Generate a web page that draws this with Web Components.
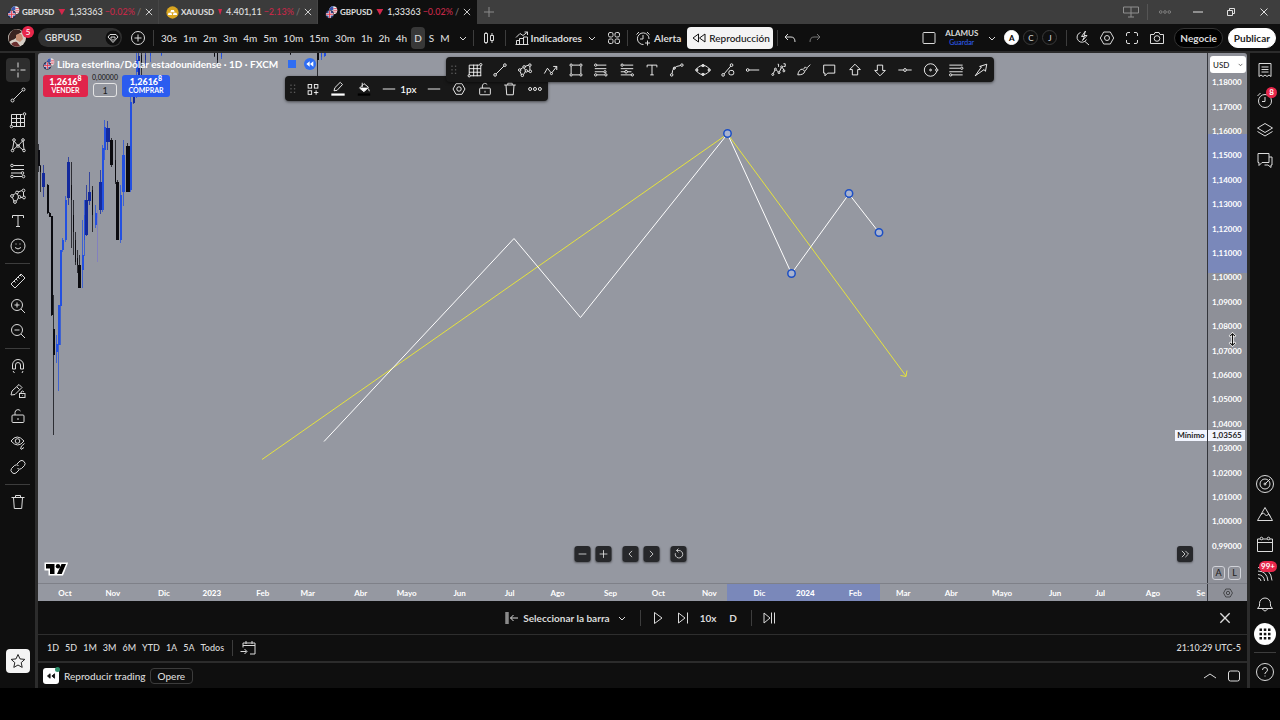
<!DOCTYPE html>
<html lang="es">
<head>
<meta charset="utf-8">
<meta name="viewport" content="width=device-width, initial-scale=1">
<title>GBPUSD</title>
<style>
  html, body { margin: 0; height: 100%; background: #000; }
  body { font: 500 10px/16px "Trebuchet MS", Lato, "Open Sans", sans-serif; color: #dbdbdb; overflow: hidden; }
</style>
</head>
<body>
<app-shell></app-shell>
<script>
const ICONS = {
  close: '<path d="M5.500 5.500l7 7M12.500 5.500l-7 7"/>',
  plus: '<path d="M9 4v10M4 9h10"/>',
  minus: '<path d="M4 9h10"/>',
  chevron: '<path d="M6 8l3 3 3-3"/>',
  up: '<path d="M3 11l6-4 6 4"/>',
  left: '<path d="M11 5L7 9l4 4"/>',
  right: '<path d="M7 5l4 4-4 4"/>',
  reset: '<path d="M5 8a4.800 4.800 0 1 0 4.500-3.500H6.500M9 2L6.500 4.500 9 7"/>',
  double: '<path d="M5 5l4 4-4 4M9.500 5l4 4-4 4"/>',
  monitor: '<path d="M1.500 4h15v6h-15zM9 4v10M6 14h6"/>',
  dots: '<circle cx="3.500" cy="9" r="1.700"/><circle cx="9" cy="9" r="1.700"/><circle cx="14.500" cy="9" r="1.700"/>',
  winrest: '<path d="M5.500 7.500h5v5h-5zM7.500 7.500v-2h5v5h-2"/>',
  gem: '<circle cx="9" cy="9" r="7.500" fill="#0f0f0f" stroke="none"/><path d="M6 5.500h6l2 2.500-5 5.500L4 8zM7 8h4v1.500L9 11.500 7 9.500z"/>',
  pluscircle: '<circle cx="9" cy="9" r="6.500"/><path d="M9 5.500v7M5.500 9h7"/>',
  candles: '<path d="M4.500 4.500h3v9h-3zM6 3v1.500M6 13.500V15M10.500 6.500h3v5h-3zM12 4v2.500M12 11.500V14"/>',
  indicators: '<path d="M3.500 15V11.500h3V15M6.500 15V9.500h4V15M10.500 15V8h4v7M3 8.500L7 4.500l3 2 4.500-3.500M11.500 3h3v3M2.500 15.500h13"/>',
  four: '<rect x="3.500" y="3.500" width="4.500" height="4.500" rx="1.500"/><rect x="10" y="3.500" width="4.500" height="4.500" rx="1.500"/><rect x="3.500" y="10" width="4.500" height="4.500" rx="1.500"/><rect x="10" y="10" width="4.500" height="4.500" rx="1.500"/>',
  alarm: '<path d="M9.500 15.500A5.800 5.800 0 1 1 15 10M9 6v4H6M2.500 5.500L5 3M13 3l2.500 2.500M13.500 11.500v5M11 14h5"/>',
  rewind: '<path d="M8.500 5v8L3 9zM15 5v8L9.500 9z"/>',
  undo: '<path d="M7 5L4 8l3 3M4 8h6q4 0 4 5"/>',
  redo: '<path d="M11 5l3 3-3 3M14 8H8q-4 0-4 5"/>',
  square: '<rect x="3" y="3.500" width="12" height="11" rx="1"/>',
  quick: '<path d="M7.500 3.500a5 5 0 1 0 6 7M12 12.500l4 3.500M12.500 2L8.500 7.500h3l-2 4L14 6.500h-3z"/>',
  hex: '<path d="M5.700 3h6.600L15.700 9l-3.400 6H5.700L2.300 9z"/><circle cx="9" cy="9" r="2.500"/>',
  full: '<path d="M3.500 7V5q0-1.500 1.500-1.500h2M11 3.500h2q1.500 0 1.500 1.500v2M14.500 11v2q0 1.500-1.500 1.500h-2M7 14.500H5q-1.500 0-1.500-1.500v-2"/>',
  camera: '<path d="M2.500 5.500h3.500l1-2h4l1 2h3.500v9h-13z"/><circle cx="9" cy="9.500" r="2.800"/>',
  cross: '<path d="M9 1.500v5M9 11.500v5M1.500 9h5M11.500 9h5M8.500 9h1"/>',
  line: '<circle cx="3.500" cy="14.500" r="1.500"/><circle cx="14.500" cy="3.500" r="1.500"/><path d="M4.600 13.400l8.800-8.800"/>',
  grid: '<path d="M2.500 3.500h11M2.500 7.500h13M2.500 11.500h13M4 15.500h12M2.500 3.500v11M7.500 3v13M11.500 3v13M15.500 4.500v11"/><circle cx="15.500" cy="3" r="1.300"/><circle cx="2.500" cy="15.500" r="1.300"/>',
  pattern: '<path d="M3.500 13.500L5 5l4 5 5-5.500 1 9M4.500 13.500L8 10.500M10 10.500l4 3.500"/><circle cx="5" cy="4" r="1.300"/><circle cx="14" cy="4" r="1.300"/><circle cx="9" cy="10" r="1.300"/><circle cx="3.500" cy="14.500" r="1.300"/><circle cx="15" cy="14.500" r="1.300"/>',
  fib: '<path d="M4.500 3.500H15M2 7.500h13M2 11h10M4.500 14.500H13"/><circle cx="3" cy="3.500" r="1.300"/><circle cx="13.500" cy="11" r="1.300"/><circle cx="3" cy="14.500" r="1.300"/><circle cx="14.500" cy="14.500" r="1.300"/>',
  fib2: '<path d="M5 3.500h11M2 7.500h14M9.500 11H14M2 11h5M2 14.500h12"/><circle cx="3.500" cy="3.500" r="1.300"/><circle cx="8" cy="11" r="1.500"/><circle cx="15" cy="14.500" r="1.300"/>',
  shapes: '<path d="M5 14.500l-1.500-4M4 8l2.500-1.500M9 5l4-1.500M14.500 5v4M13.500 10.500H12M9.500 10.500L7.500 14M8 7l1.500 2"/><circle cx="8" cy="5.500" r="1.400"/><circle cx="14.500" cy="3.500" r="1.400"/><circle cx="15" cy="10.500" r="1.400"/><circle cx="3" cy="9" r="1.400"/><circle cx="6" cy="15" r="1.400"/><circle cx="10.500" cy="10" r="1.400"/>',
  text: '<path d="M3.500 6V3.500h11V6M9 3.500v11M7 14.500h4"/>',
  smile: '<circle cx="9" cy="9" r="7"/><path d="M6 10.500q3 3 6 0M6.500 7h1M10.500 7h1"/>',
  ruler: '<path d="M2 12L12 2l4 4L6 16zM5 9l1.500 1.500M7 7l1.500 1.500M9 5l1.500 1.500M11 3l1.500 1.500"/>',
  zoomin: '<circle cx="8" cy="8" r="5.500"/><path d="M12 12l4 4M5.500 8h5M8 5.500v5"/>',
  zoomout: '<circle cx="8" cy="8" r="5.500"/><path d="M12 12l4 4M5.500 8h5"/>',
  magnet: '<path d="M3.500 12V8a5.500 5.500 0 0 1 11 0v4h-3V8a2.500 2.500 0 0 0-5 0v4zM4 14l1.500 2M13 16l1-2"/>',
  penlock: '<path d="M2 13l1-4 7-6.500 3 3L6 12.500zM8 5l2.500 2.500"/><rect x="10.500" y="11.500" width="5.500" height="4" fill="#0f0f0f"/><path d="M12 11.500V10q1.500-2 3 0M13 13.500h.5"/>',
  lock: '<rect x="3" y="8" width="12" height="7.500" rx="1"/><path d="M6 8V5.500a3 3 0 0 1 5.500-1.500M9 11v2"/>',
  eye: '<path d="M2 8q6-8 13 0-6 8-13 0z"/><circle cx="8.500" cy="8" r="2.300"/><path d="M11.500 16l1-3 3-2.500M12 16.500l3-2"/>',
  link: '<path d="M8 6l3-3q2-1.500 4 .5t.5 4l-3 3q-2 1.500-4 0M10 12l-3 3q-2 1.500-4-.5t-.5-4l3-3q2-1.500 4 0"/>',
  trash: '<path d="M2.500 4.500h13M6.500 4.500v-2h5v2M4.500 4.500l.8 11h7.400l.8-11"/>',
  star: '<path d="M9 2.500l2 4.400 4.800.5-3.600 3.200 1 4.800L9 13l-4.200 2.400 1-4.800-3.600-3.200 4.800-.5z"/>',
  zigzag: '<path d="M1.500 13L5 7l4 5M10 12l5.500-7M11.500 5h4v4"/><circle cx="9.500" cy="13" r="1.200"/>',
  rect: '<path d="M5 3.500h8M5 14.500h8M3.500 5v8M14.500 5v8"/><circle cx="3.500" cy="3.500" r="1.300"/><circle cx="14.500" cy="3.500" r="1.300"/><circle cx="3.500" cy="14.500" r="1.300"/><circle cx="14.500" cy="14.500" r="1.300"/>',
  curve: '<path d="M3.500 13q0-8 9.500-9"/><circle cx="3" cy="14.500" r="1.400"/><circle cx="14.500" cy="3.500" r="1.400"/><circle cx="6" cy="7" r="1.200" />',
  ellipse: '<ellipse cx="9" cy="9" rx="7" ry="5"/><circle cx="9" cy="4" r="1.300"/><circle cx="9" cy="14" r="1.300"/><circle cx="2" cy="9" r="1.300"/><circle cx="16" cy="9" r="1.300"/>',
  linelock: '<circle cx="3.500" cy="14.500" r="1.500"/><circle cx="13" cy="3.500" r="1.500"/><path d="M4.600 13.400l7.500-8.800"/><rect x="10" y="9.500" width="5.500" height="5" rx="2"/>',
  hray: '<circle cx="3" cy="9" r="1.500"/><path d="M4.500 9H16"/>',
  elliott: '<path d="M2.500 13l2-4M6 9l2.500 2.500M9.500 11l2-4.500M13 6.500l1.500 2.500M7.500 2.500h1v3M14 2h2v3h-2"/><circle cx="5" cy="8" r="1.100"/><circle cx="9" cy="12" r="1.100"/><circle cx="12" cy="5.500" r="1.100"/><circle cx="2" cy="14" r="1.100"/><circle cx="14.500" cy="10" r="1.100"/>',
  brush: '<path d="M2 14.500q1-6 5-6.500l3 2.500q-1 4-8 4zM8.500 8l2-2.500 2 2L10 10M12.500 6.500L16 3"/>',
  note: '<path d="M3 3.500h12.500v9H7.500l-3 3v-3H3z"/>',
  arrowup: '<path d="M9 2.500l6 6h-3v6H6v-6H3z"/>',
  arrowdown: '<path d="M9 15.500l6-6h-3v-6H6v6H3z"/>',
  hline: '<path d="M1.500 9h5.500M11 9h5.500"/><circle cx="9" cy="9" r="1.600"/>',
  circle: '<circle cx="8.500" cy="9" r="7"/><circle cx="8.500" cy="9" r="1"/><circle cx="15.500" cy="9" r="1.300" fill="#0f0f0f"/>',
  channel: '<path d="M1.500 3.500h15M1.500 7h12M1.500 11h15M4.500 14.500h12"/><circle cx="15.500" cy="7" r="1.300"/><circle cx="3" cy="14.500" r="1.300"/>',
  arrow: '<path d="M2.500 15.500l7-10-2-.5 8-2.500-1.500 8-1.500-2z"/>',
  grip: '<g fill="#5a5a5a" stroke="none"><rect x="6" y="4" width="1.500" height="1.500"/><rect x="10" y="4" width="1.500" height="1.500"/><rect x="6" y="8" width="1.500" height="1.500"/><rect x="10" y="8" width="1.500" height="1.500"/><rect x="6" y="12" width="1.500" height="1.500"/><rect x="10" y="12" width="1.500" height="1.500"/></g>',
  template: '<rect x="3.500" y="4" width="4" height="4"/><rect x="10.500" y="4" width="4" height="4"/><rect x="3.500" y="11" width="4" height="4"/><path d="M12.500 10.500v5M10 13h5"/>',
  pencil: '<path d="M4.500 11l1-3.500L11.500 1.500l2.500 2.500L8 10.500z"/><rect x="1.500" y="14" width="15" height="2.500" fill="#fff" stroke="none"/>',
  bucket: '<path d="M4 8l5-5 5 4-5 5zM7 2v5M14 8.500l1 3"/><path d="M5 8h8l-4 3.500z" fill="currentColor"/><rect x="2" y="14" width="14" height="2.500" fill="#000" stroke="none"/>',
  dash: '<path d="M2 9h14"/>',
  list: '<path d="M3 2.500h12v13l-2-1.500-2 1.500-2-1.500-2 1.500-2-1.500-2 1.500zM5.500 6h7M5.500 8.500h7M5.500 11h7"/>',
  clock: '<circle cx="9" cy="10" r="6.500"/><path d="M9 6v4.500H6M1.500 5L4.500 2"/>',
  layers: '<path d="M1.500 7L9 2.500 16.500 7 9 11.500zM1.500 10.500L9 15l7.500-4.500"/>',
  chat: '<path d="M2 2.500h11v9H6l-3 3v-3H2zM13 6h3v8h-1v2.500L12 14H8.500"/>',
  radar: '<circle cx="9" cy="9" r="8.500"/><circle cx="9" cy="9" r="5"/><circle cx="9" cy="9" r="1"/><path d="M9 9l5-5"/>',
  mount: '<path d="M9 2.500l7.500 13h-15zM5 9.500l2.500-1.500 3 3 2-2 2 2.500"/>',
  calendar: '<path d="M1.500 4h15v12.500h-15zM1.500 7.500h15"/><circle cx="5.500" cy="3.500" r="1.300" fill="#0f0f0f"/><circle cx="12.500" cy="3.500" r="1.300" fill="#0f0f0f"/>',
  feed: '<path d="M2 6q9 0 10 10M2 9.500q6 .5 6.500 6.500M2 13q2.500 0 3 3M2 2.500q13 .5 14 13"/>',
  bell: '<path d="M1.500 13.500h15l-2-2.500V8.500a5.500 5.500 0 0 0-11 0V11zM6.500 14q2.500 4 5 0"/>',
  help: '<circle cx="9" cy="9" r="8.500"/><path d="M6.500 7q0-2.500 2.500-2.500T11.500 7Q11.500 8.500 9 10v1M9 12.500v1"/>',
  apps: '<g fill="#111" stroke="none"><rect x="3.500" y="3.500" width="2.500" height="2.500"/><rect x="7.800" y="3.500" width="2.500" height="2.500"/><rect x="12" y="3.500" width="2.500" height="2.500"/><rect x="3.500" y="7.800" width="2.500" height="2.500"/><rect x="7.800" y="7.800" width="2.500" height="2.500"/><rect x="12" y="7.800" width="2.500" height="2.500"/><rect x="3.500" y="12" width="2.500" height="2.500"/><rect x="7.800" y="12" width="2.500" height="2.500"/><rect x="12" y="12" width="2.500" height="2.500"/></g>',
  selbar: '<path d="M4 3v12" stroke-width="3.500" stroke="#8a8a8a"/><path d="M7.500 9H15M10.500 6l-3 3 3 3"/>',
  play: '<path d="M5.500 3.500v11L13 9z"/>',
  step: '<path d="M4.500 4v10l6.500-5zM13.500 3.500v11"/>',
  end: '<path d="M4 4v10l6-5zM11.500 3.500v11M14.500 3.500v11"/>',
  goto: '<path d="M4 8.500V4h12v11h-5M4 6.500h12M7 2v3M13 2v3M1.500 12.500h6M5.500 10l2.500 2.500L5.500 15"/>',
  box: '<rect x="3.500" y="4" width="11" height="10" rx="2"/>',
  flags: '<circle cx="11.500" cy="6" r="5.500" fill="#eee" stroke="none"/><path d="M11.500 3.500h5M11.500 6h5.500M7 8.500h9" stroke="#e0354b"/><path d="M11.500.500a5.500 5.500 0 0 0-5.500 5.500h5.500z" fill="#3a57b0" stroke="none"/><circle cx="6.500" cy="11.500" r="5.500" fill="#33489c" stroke="#222"/><path d="M6.500 6.500v10M1.500 11.500h10" stroke="#fff" stroke-width="3"/><path d="M6.500 6.500v10M1.500 11.500h10" stroke="#e0354b" stroke-width="1.500"/>',
  gold: '<circle cx="9" cy="9" r="8.500" fill="#d9a520" stroke="none"/><path d="M7 5.500h4l1 3H6zM3.500 9.500h4l1 3h-6zM10.500 9.500h4l1 3h-6z" fill="#fff" stroke="none"/>',
  avatar: '<circle cx="9" cy="9" r="9" fill="#d6cfc6" stroke="none"/><path d="M1 13Q-.5 5 5 1q6-2 9 2-3 1-5 4-1 3-5 4z" fill="#3b2420" stroke="none"/><path d="M8 6q4-3 6 0l1 4-3 3-4-2z" fill="#c78f74" stroke="none"/><path d="M3 15q3-3 6-2l3 4q-5 2-9-2z" fill="#6b2f2f" stroke="none"/>',
  rewbadge: '<circle cx="9" cy="9" r="9" fill="#2f6df2" stroke="none"/><path d="M8.500 5v8L3.500 9zM14 5v8L9 9z" fill="#fff" stroke="none"/>',
  rewsolid: '<path d="M8 6.500v5L5 9zM13 6.500v5L10 9z" fill="#111" stroke="#111"/>',
  resize: '<path d="M9 2v14M5.500 5.500L9 2l3.500 3.500M5.500 12.500L9 16l3.500-3.500" stroke="#fff" stroke-width="3"/><path d="M9 2v14M6 5l3-3 3 3M6 13l3 3 3-3" stroke="#111" stroke-width="1.300"/>'
};

const COMMON = `
  :host, * { box-sizing: border-box; }
  button, input, select { font: inherit; color: inherit; background: none; border: 0; padding: 0; margin: 0; }
  button { display: inline-flex; align-items: center; justify-content: center; white-space: nowrap; flex: none; }
  a { color: inherit; text-decoration: none; }
  .sep { width: 1px; height: 16px; background: #3d3d3d; flex: none; }
`;

function define(name, css, html) {
  customElements.define(name, class extends HTMLElement {
    constructor() {
      super();
      const template = document.createElement('template');
      const markup = typeof html === 'function' ? html(this) : html;
      template.innerHTML = `<style>${COMMON}${css}</style>${markup}`;
      this.attachShadow({ mode: 'open' }).append(template.content.cloneNode(true));
    }
  });
}

const icon = (name, cls = '') => `<ui-icon name="${name}" class="${cls}"></ui-icon>`;
const iconButton = (name, label = name, cls = '') => `<button class="ib ${cls}" aria-label="${label}">${icon(name)}</button>`;

define('ui-icon', `
  :host { display: inline-block; width: var(--icon, 18px); height: var(--icon, 18px); flex: none; }
  svg { display: block; width: 100%; height: 100%; overflow: visible; fill: none; stroke: currentColor; stroke-width: 1; }
`, host => `<svg viewBox="0 0 18 18" aria-hidden="true">${ICONS[host.getAttribute('name')] || ''}</svg>`);

define('ticker-tab', `
  :host { display: flex; align-items: center; width: 159px; height: 24px; padding: 0 1px 0 7px; background: #3b3b3b; font-size: 9px; border-right: 1px solid #454545; }
  :host([active]) { background: #0f0f0f; border-color: #0f0f0f; }
  a { display: flex; align-items: center; flex: 1; min-width: 0; white-space: nowrap; gap: 2px; }
  .flag { --icon: 13px; }
  .name { font-weight: 700; font-size: 8px; }
  .down { width: 8px; height: 6px; margin: 0 2px; background: #d3274b; clip-path: polygon(0 0, 100% 0, 50% 100%); }
  .pct { color: #c52848; }
  .slash { color: #777; }
  button { --icon: 16px; }
`, host => `
  <a href="#">${icon(host.getAttribute('flag'), 'flag')}<span class="name"><slot></slot></span><span class="down"></span><span>${host.getAttribute('price')}</span><span class="pct">${host.getAttribute('pct')}</span><span class="slash">/</span></a>
  <button aria-label="Cerrar pestaña">${icon('close')}</button>`);

define('tab-strip', `
  :host { display: flex; height: 24px; background: #3e3e3e; align-items: center; color: #e0e0e0; }
  .add { width: 24px; height: 24px; color: #8a8a8a; }
  .win { display: flex; margin-left: auto; align-items: center; height: 24px; }
  .win button { width: 33px; height: 24px; }
  .win .dim { color: #8f8f8f; }
  .win .sep { background: #555; }
  .win .dots { --icon: 14px; }
`, `
  <ticker-tab flag="flags" price="1,33363" pct="−0.02%">GBPUSD</ticker-tab>
  <ticker-tab flag="gold" price="4.401,11" pct="−2.13%">XAUUSD</ticker-tab>
  <ticker-tab flag="flags" price="1,33363" pct="−0.02%" active>GBPUSD</ticker-tab>
  <button class="add" aria-label="Nueva pestaña">${icon('plus')}</button>
  <div class="win">
    ${iconButton('monitor', 'Pantalla', 'dim')}<span class="sep"></span>
    ${iconButton('dots', 'Más', 'dim dots')}${iconButton('minus', 'Minimizar')}${iconButton('winrest', 'Restaurar')}${iconButton('close', 'Cerrar')}
  </div>`);

define('top-bar', `
  :host { display: flex; align-items: center; height: 27px; background: #0f0f0f; padding: 0 4px 0 8px; }
  .avatar { position: relative; --icon: 18px; width: 18px; height: 18px; margin-right: 12px; }
  .badge { position: absolute; left: 14px; top: -3px; width: 12px; height: 12px; border-radius: 6px; background: #e8274b; color: #fff; font-size: 8px; line-height: 12px; text-align: center; }
  .symbol { width: 84px; height: 19px; border-radius: 10px; background: #303030; justify-content: space-between; padding: 0 0 0 7px; font-weight: 700; font-size: 9px; }
  .ib { width: 25px; height: 22px; }
  .add { width: 31px; }
  .frames { display: flex; padding: 0 0 0 4px; }
  .frames button { height: 22px; padding: 0 3px; border-radius: 4px; }
  .frames .on { background: #383838; margin: 0 1px; }
  .grow { flex: 1; }
  .bold { font-weight: 700; }
  .replay { height: 22px; padding: 0 3px; background: #f4f4f4; color: #111; border-radius: 4px; gap: 1px; }
  .alert { padding: 0 6px; gap: 2px; }
  .ind { padding: 0 0 0 7px; }
  .chev { width: 20px; }
  .layout { flex-direction: column; line-height: 9px; padding: 0 4px; font-size: 8px; font-weight: 700; }
  .layout small { color: #2d5cf0; font-size: 7px; font-weight: 500; }
  .dot { width: 15px; height: 15px; margin: 0 2px; border-radius: 8px; border: 1px solid #3a3a3a; font-size: 8px; line-height: 12px; }
  .dot.on { background: #fff; color: #000; border-color: #fff; font-weight: 700; }
  .pill { height: 20px; padding: 0 5px; border-radius: 10px; border: 1px solid #333; background: #000; font-weight: 700; margin-left: 5px; }
  .pill.white { background: #fff; color: #222; border-color: #fff; }
  .dimmed { color: #777; }
  .sep.after { margin-left: 4px; }
  .sep.before { margin: 0 2px 0 7px; }
`, `
  <button class="avatar" aria-label="Perfil">${icon('avatar')}<span class="badge">5</span></button>
  <button class="symbol">GBPUSD${icon('gem')}</button>
  ${iconButton('pluscircle', 'Comparar', 'add')}
  <span class="sep"></span>
  <nav class="frames">
    ${['30s','1m','2m','3m','4m','5m','10m','15m','30m','1h','2h','4h','D','S','M'].map(t => `<button class="${t === 'D' ? 'on' : ''}">${t}</button>`).join('')}
  </nav>
  ${iconButton('chevron', 'Intervalos', 'chev')}
  <span class="sep"></span>
  ${iconButton('candles', 'Velas', 'add')}
  <span class="sep"></span>
  <button class="ind bold">${icon('indicators')}Indicadores</button>
  ${iconButton('chevron', 'Favoritos', 'chev')}
  ${iconButton('four', 'Plantillas')}
  <span class="sep"></span>
  <button class="alert bold">${icon('alarm')}Alerta</button>
  <button class="replay">${icon('rewind')}Reproducción</button>
  <span class="sep after"></span>
  ${iconButton('undo', 'Deshacer')}${iconButton('redo', 'Rehacer', 'dimmed')}
  <span class="grow"></span>
  ${iconButton('square', 'Diseño')}
  <button class="layout"><span>ALAMUS</span><small>Guardar</small></button>
  ${iconButton('chevron', 'Diseños', 'chev')}
  <button class="dot on">A</button><button class="dot">C</button><button class="dot">J</button>
  <span class="sep before"></span>
  ${iconButton('quick', 'Búsqueda rápida')}${iconButton('hex', 'Ajustes')}${iconButton('full', 'Pantalla completa')}${iconButton('camera', 'Captura')}
  <button class="pill">Negocie</button>
  <button class="pill white">Publicar</button>`);

define('tool-rail', `
  :host { display: flex; flex-direction: column; align-items: center; width: 35px; background: #0f0f0f; padding: 4px 0 15px; }
  .group { display: grid; grid-auto-rows: 1fr; }
  .g8 { height: 202px; } .g3 { height: 76px; } .g5 { height: 127px; } .g1 { height: 25px; }
  .ib { width: 24px; height: 24px; border-radius: 4px; align-self: center; }
  .on { background: #2e2e2e; }
  hr { width: 25px; height: 1px; border: 0; background: #3d3d3d; margin: 4px 0; }
  .fav { margin-top: auto; width: 24px; height: 24px; border-radius: 4px; background: #f4f4f4; color: #222; }
`, `
  <div class="group g8">${iconButton('cross', 'Cursor', 'on')}${['line','grid','pattern','fib','shapes','text','smile'].map(n => iconButton(n)).join('')}</div><hr>
  <div class="group g3">${['ruler','zoomin','zoomout'].map(n => iconButton(n)).join('')}</div><hr>
  <div class="group g5">${['magnet','penlock','lock','eye','link'].map(n => iconButton(n)).join('')}</div><hr>
  <div class="group g1">${iconButton('trash')}</div>
  <button class="fav" aria-label="Favoritos">${icon('star')}</button>`);

define('side-rail', `
  :host { display: flex; flex-direction: column; align-items: center; width: 30px; background: #0f0f0f; padding: 2px 0 1px; }
  .ib { position: relative; width: 30px; height: 30px; }
  .grow { flex: 1; }
  .wrap { position: relative; display: flex; }
  .badge { position: absolute; right: 3px; top: 2px; min-width: 11px; height: 11px; padding: 0 2px; border-radius: 6px; background: #e8274b; color: #fff; font-size: 8px; line-height: 11px; text-align: center; font-weight: 700; }
  .badge.wide { right: 3px; }
  .apps { width: 22px; height: 22px; margin: 4px; border-radius: 11px; background: #fff; }
  hr { width: 22px; height: 1px; border: 0; background: #3d3d3d; margin: 3px 0 4px; }
`, `
  ${iconButton('list')}
  <div class="wrap">${iconButton('clock')}<span class="badge">8</span></div>
  ${iconButton('layers')}${iconButton('chat')}
  <span class="grow"></span>
  ${iconButton('radar')}${iconButton('mount')}${iconButton('calendar')}
  <div class="wrap">${iconButton('feed')}<span class="badge wide">99+</span></div>
  ${iconButton('bell')}
  <button class="apps" aria-label="Aplicaciones">${icon('apps')}</button>
  <hr>
  ${iconButton('help')}`);

define('draw-toolbar', `
  :host { display: grid; grid-template-columns: 16px repeat(21, 1fr); align-items: center; justify-items: center; height: 25px; background: #181818; border-radius: 4px; box-shadow: 0 1px 3px #0008; --icon: 16px; }
  .ib { width: 24px; height: 24px; }
`, `${icon('grip')}${['grid','line','shapes','zigzag','rect','fib','fib2','text','curve','ellipse','linelock','hray','elliott','brush','note','arrowup','arrowdown','hline','circle','channel','arrow'].map(n => iconButton(n)).join('')}`);

define('line-toolbar', `
  :host { display: flex; align-items: center; height: 25px; background: #181818; border-radius: 4px; box-shadow: 0 1px 3px #0008; --icon: 16px; }
  .ib, .px { flex: 1 1 25px; height: 24px; }
  .px { flex-basis: 45px; gap: 3px; }
`, `${icon('grip', 'grip')}${iconButton('template')}${iconButton('pencil')}${iconButton('bucket')}<button class="px">${icon('dash')}1px</button>${iconButton('dash', 'Estilo')}${iconButton('hex')}${iconButton('lock')}${iconButton('trash')}${iconButton('dots')}`);

/* Candle list: x, wick top, wick bottom, body top, body bottom, body width, colour key */
const CANDLES = [
  [38,144,172,150,166,2,'k'],[40,165,192,166,172,1,'k'],[43,165,197,173,187,3,'n'],[47,184,214,185,213,2,'k'],[49,212,217,213,217,2,'k'],
  [51,216,316,216,315,2,'k'],[53,295,435,329,355,2,'k'],[56,335,363,344,352,2,'b'],[58,305,391,305,345,2,'b'],[60,250,345,250,306,2,'b'],
  [62,238,252,240,250,2,'b'],[65,196,242,200,240,2,'b'],[68,157,205,162,198,3,'n'],[71,162,248,185,200,1,'k'],[73,200,255,215,232,1,'k'],
  [75,232,265,240,262,1,'k'],[77,250,273,258,265,1,'k'],[79,255,288,265,288,3,'k'],[82,220,288,255,270,2,'b'],[84,200,256,215,240,1,'b'],
  [86,185,236,200,235,3,'n'],[89,172,205,192,201,3,'n'],[92,186,232,190,215,1,'k'],[95,205,228,213,225,2,'b'],[97,210,262,213,218,1,'p'],
  [100,170,214,182,210,3,'n'],[102,145,212,148,210,2,'b'],[104,120,160,127,150,2,'b'],[107,121,150,128,142,4,'n'],[111,138,167,140,165,3,'k'],
  [115,140,184,160,182,1,'k'],[117,180,240,182,240,3,'k'],[120,185,243,195,240,2,'b'],[123,140,206,155,192,3,'b'],[127,143,192,146,192,4,'k'],
  [130,96,192,102,190,2,'b'],[133,88,104,95,103,2,'n'],[136,53,98,60,72,2,'b'],[138,53,90,56,80,2,'n'],[141,53,84,55,62,1,'k'],
  [145,53,66,55,60,1,'n'],[150,53,62,53,56,1,'b'],[161,53,56,53,55,1,'b'],[214,53,57,53,56,1,'k'],[217,53,63,53,60,1,'k'],[221,53,59,53,57,1,'b'],
  [290,53,55,53,54,1,'k'],[317,53,85,53,60,2,'k'],[321,53,60,53,57,1,'b'],[324,53,57,53,56,2,'b']
];
const INK = { k: '#0b0b10', b: '#2350e0', n: '#142a9c', p: '#7d78c8' };

define('price-chart', `
  :host { display: block; position: relative; background: #9598a1; overflow: hidden; color: #fff; }
  svg.plot { position: absolute; inset: 0; width: 100%; height: 100%; }
  .plot * { vector-effect: non-scaling-stroke; }
  .legend { position: relative; padding: 3px 5px; }
  .title { display: flex; align-items: center; gap: 2px; height: 16px; font-weight: 700; white-space: nowrap; }
  .title .flag { --icon: 12px; }
  .mark { width: 8px; height: 8px; background: #2f6df2; margin: 0 6px 0 8px; }
  .title .rew { --icon: 12px; }
  .trade { display: flex; gap: 5px; align-items: flex-start; margin-top: 3px; }
  .trade button { flex-direction: column; width: 45px; height: 22px; border-radius: 3px; background: #e0244a; font-size: 8px; line-height: 9px; font-weight: 700; }
  .trade button.buy { width: 48px; background: #2b5cf0; }
  .trade b { font-size: 9px; }
  .trade span { font-size: 7px; }
  sup { font-size: 7px; line-height: 0; }
  label { display: flex; flex-direction: column; width: 24px; align-items: center; color: #222; font-size: 7px; line-height: 8px; margin-top: -2px; }
  input { width: 24px; height: 14px; margin-top: 2px; border: 1px solid #e4e4e4; border-radius: 3px; text-align: center; font-size: 9px; line-height: 12px; }
  .tool { position: absolute; }
  draw-toolbar { left: 34.900%; width: 548px; top: 4px; }
  line-toolbar { left: 21.100%; width: 263px; top: 23px; }
  .nav { position: absolute; left: 50%; bottom: 21px; display: flex; gap: 5px; transform: translateX(-50%); padding-left: 15px; }
  .nav button, .latest { width: 16px; height: 16px; border-radius: 3px; background: #27282b; box-shadow: 0 1px 2px #0006; --icon: 14px; color: #eee; }
  .nav .far { margin-left: 6px; }
  .latest { position: absolute; right: 14px; bottom: 21px; }
  .logo { position: absolute; left: 6px; bottom: 6px; width: 24px; height: 16px; }
  .low { position: absolute; right: 0; top: 71.100%; width: 32px; height: 11px; background: #f2f5ff; color: #222; font-size: 8px; line-height: 11px; text-align: center; font-weight: 700; }
`, `
  <svg class="plot" viewBox="38 53 1169 530" preserveAspectRatio="none" aria-hidden="true">
    ${CANDLES.map(([x, wt, wb, bt, bb, w, c]) => `<path d="M${x + .5} ${wt}V${wb}" stroke="${INK[c]}" opacity=".75"/><rect x="${x - (w > 2 ? 1 : 0)}" y="${bt}" width="${w}" height="${bb - bt}" fill="${INK[c]}"/>`).join('')}
    <g fill="none" stroke-width="1">
      <path d="M262 459.500L727.500 134 906 376M900.500 375.500l5.500 1 1-6" stroke="#e6e33c"/>
      <path d="M324 441.500L514 238.500l66.500 79L727.500 134 791.500 273.500 849 194l30 38.500" stroke="#fff"/>
    </g>
    <g fill="#a9b3cf" stroke="#1c4fc4" stroke-width="1.500">
      <circle cx="727.500" cy="133.500" r="3.700"/><circle cx="791.500" cy="273.500" r="3.700"/><circle cx="849" cy="193.500" r="3.700"/><circle cx="879" cy="232.500" r="3.700"/>
    </g>
  </svg>
  <div class="legend">
    <div class="title">${icon('flags', 'flag')}<span>Libra esterlina/Dólar estadounidense · 1D · FXCM</span><span class="mark"></span>${icon('rewbadge', 'rew')}</div>
    <div class="trade">
      <button><b>1,2616<sup>8</sup></b><span>VENDER</span></button>
      <label>0,00000<input value="1" aria-label="Cantidad"></label>
      <button class="buy"><b>1,2616<sup>8</sup></b><span>COMPRAR</span></button>
    </div>
  </div>
  <line-toolbar class="tool"></line-toolbar>
  <draw-toolbar class="tool"></draw-toolbar>
  <div class="nav">${iconButton('minus', 'Alejar')}${iconButton('plus', 'Acercar')}${iconButton('left', 'Atrás', 'far')}${iconButton('right', 'Adelante')}${iconButton('reset', 'Restablecer', 'far')}</div>
  <button class="latest" aria-label="Última barra">${icon('double')}</button>
  <svg class="logo" viewBox="0 0 24 16" aria-hidden="true"><path d="M2 3h9v10H6V8H2zM12 3h10l-4 10h-6l2.500-5H12z" fill="#fff" stroke="#fff" stroke-width="3"/><path d="M2 3h8.500v10H6V7.500H2zM17.500 3H22l-4.300 10H13z" fill="#000"/><circle cx="14" cy="5.200" r="2.200" fill="#000"/></svg>
  <span class="low">Mínimo</span>`);

const PRICES = Array.from({ length: 20 }, (_, i) => ((118 - i) / 100).toFixed(5).replace('.', ','));

define('price-axis', `
  :host { display: flex; flex-direction: column; position: relative; width: 40px; background: #8e9098; border-left: 1px solid #33353b; color: #fff; font-size: 8px; padding: 17px 0 0; }
  .range { position: absolute; left: 0; right: 0; top: 15.300%; height: 26.200%; background: #7a88ba; }
  ol { position: relative; list-style: none; margin: 0; padding: 0; flex: 1; display: grid; grid-auto-rows: 1fr; }
  li { display: flex; align-items: center; padding-left: 4px; line-height: 12px; font-weight: 700; }
  .cur { position: absolute; left: 2px; top: 3px; width: 36px; height: 17px; background: #fff; border-radius: 3px; color: #222; display: flex; align-items: center; }
  select { appearance: none; width: 100%; padding-left: 3px; }
  .cur ui-icon { position: absolute; right: 0; --icon: 11px; pointer-events: none; }
  .value { position: absolute; left: 0; top: 71.100%; width: 37px; height: 11px; padding-left: 4px; background: #f2f5ff; color: #222; line-height: 11px; font-weight: 700; }
  .scale { display: flex; gap: 3px; padding: 5px 4px 0; height: 25px; align-items: center; }
  .scale button { width: 13px; height: 14px; border: 1px solid #d0d2d8; border-radius: 3px; color: #222; font-size: 9px; line-height: 12px; }
  .cursor { position: absolute; left: 17px; top: 52.600%; --icon: 15px; }
`, `
  <span class="range"></span>
  <ol>${PRICES.map(p => `<li>${p}</li>`).join('')}</ol>
  <span class="value">1,03565</span>
  <label class="cur"><select aria-label="Moneda"><option>USD</option></select>${icon('chevron')}</label>
  <div class="scale"><button>A</button><button>L</button></div>
  ${icon('resize', 'cursor')}`);

/* Each label with its distance to the following one */
const DATES = [['Oct',48],['Nov',51],['Dic',48],['2023',51],['Feb',45],['Mar',53],['Abr',46],['Mayo',53],['Jun',50],['Jul',48],['Ago',53],['Sep',48],['Oct',51],['Nov',50],['Dic',46],['2024',50],['Feb',48],['Mar',48],['Abr',51],['Mayo',53],['Jun',45],['Jul',53],['Ago',48],['Se',6]];

define('time-axis', `
  :host { display: flex; height: 18px; background: #9598a1; color: #fff; border-top: 1px solid #7e8088; font-size: 8px; font-weight: 700; }
  .scale { position: relative; flex: 1; min-width: 0; display: flex; overflow: hidden; align-items: center; }
  .range { position: absolute; top: 0; bottom: 0; left: 58.900%; width: 13.100%; background: #7a88ba; }
  .cell { position: relative; min-width: 0; }
  .cell span { display: flex; width: 0; justify-content: center; line-height: 16px; }
  .y { font-weight: 900; }
  .set { width: 40px; border-left: 1px solid #33353b; background: #8e9098; color: #222; --icon: 12px; }
`, `
  <div class="scale"><span class="range"></span><div class="cell" style="flex:27 1 0"></div>${DATES.map(([d, g]) => `<div class="cell ${/^2/.test(d) ? 'y' : ''}" style="flex:${g} 1 0"><span>${d}</span></div>`).join('')}</div>
  <button class="set" aria-label="Ajustes de escala">${icon('hex')}</button>`);

define('replay-bar', `
  :host { display: grid; grid-template-columns: 1fr auto 1fr; align-items: center; height: 34px; background: #0f0f0f; border-bottom: 1px solid #2e2e2e; }
  .mid { display: flex; align-items: center; }
  .ib, .mid > button { width: 25px; height: 24px; }
  .mid .sel { width: auto; gap: 2px; }
  .sep { margin: 0 5px; }
  .mid button { font-weight: 700; }
  .close { justify-self: end; margin-right: 10px; --icon: 24px; }
`, `
  <span></span>
  <div class="mid">
    <button class="sel">${icon('selbar')}Seleccionar la barra</button>${iconButton('chevron')}<span class="sep"></span>
    ${iconButton('play')}${iconButton('step')}<button>10x</button><button>D</button><span class="sep"></span>${iconButton('end')}
  </div>
  ${iconButton('close', 'Cerrar', 'close')}`);

define('range-bar', `
  :host { display: flex; align-items: center; height: 26px; background: #0f0f0f; padding: 0 6px; font-size: 9px; }
  button { height: 20px; padding: 0 3px; }
  .sep { margin: 0 5px; }
  .ib { padding: 0; width: 20px; }
  time { margin-left: auto; }
`, `
  ${['1D','5D','1M','3M','6M','YTD','1A','5A','Todos'].map(t => `<button>${t}</button>`).join('')}
  <span class="sep"></span>${iconButton('goto', 'Ir a')}
  <time>21:10:29 UTC-5</time>`);

define('trading-bar', `
  :host { display: flex; align-items: center; height: 25px; background: #0f0f0f; padding: 0 4px 0 5px; margin-top: 2px; }
  .trade { gap: 5px; position: relative; }
  .tile { display: flex; width: 16px; height: 16px; border-radius: 3px; background: #fff; --icon: 16px; }
  .live { position: absolute; left: 12px; top: -1px; width: 5px; height: 5px; border-radius: 3px; background: #2e8f6b; }
  .open { height: 16px; border: 1px solid #3c3c3c; border-radius: 4px; padding: 0 7px; margin-left: 4px; }
  .end { margin-left: auto; display: flex; gap: 6px; }
`, `
  <button class="trade"><span class="tile">${icon('rewsolid')}</span><span class="live"></span>Reproducir trading</button>
  <button class="open">Opere</button>
  <div class="end">${iconButton('up', 'Expandir')}${iconButton('box', 'Maximizar')}</div>`);

define('app-shell', `
  :host { display: flex; flex-direction: column; height: 100vh; padding-bottom: 32px; background: #000; }
  main { flex: 1; min-height: 0; display: flex; gap: 3px; background: #2c2c2c; padding-top: 2px; }
  .center { flex: 1; min-width: 0; display: flex; flex-direction: column; }
  .chart { flex: 1; min-height: 0; display: flex; border-radius: 3px 3px 0 0; overflow: hidden; }
  price-chart { flex: 1; min-width: 0; }
`, `
  <tab-strip></tab-strip>
  <top-bar></top-bar>
  <main>
    <tool-rail></tool-rail>
    <div class="center">
      <div class="chart"><price-chart></price-chart><price-axis></price-axis></div>
      <time-axis></time-axis>
      <replay-bar></replay-bar>
      <range-bar></range-bar>
      <trading-bar></trading-bar>
    </div>
    <side-rail></side-rail>
  </main>`);
</script>
</body>
</html>
